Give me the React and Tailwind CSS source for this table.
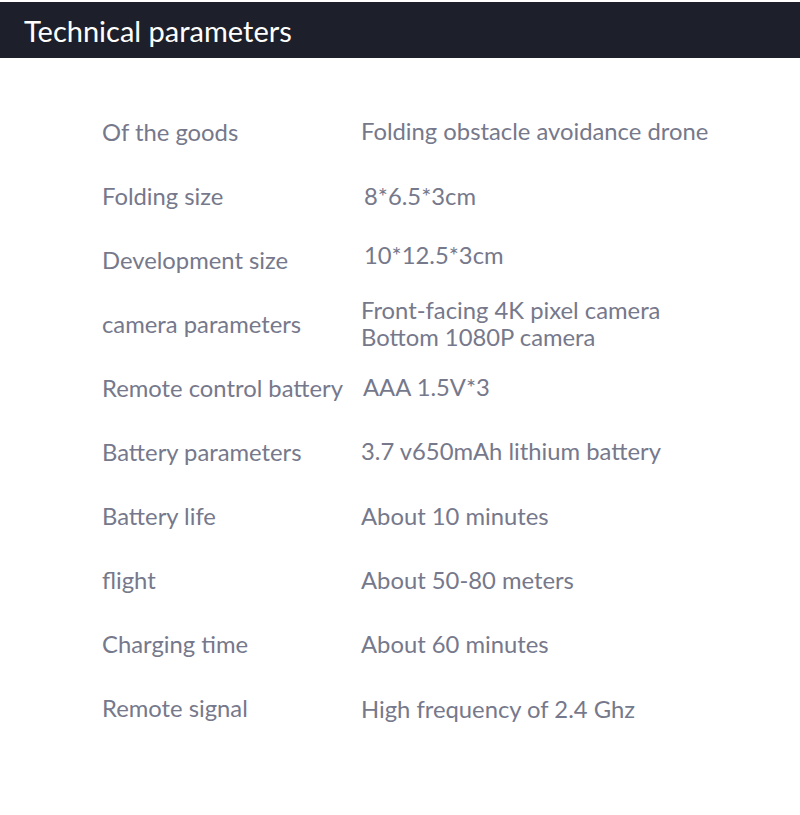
const specs = [
  ["Of the goods", ["Folding obstacle avoidance drone"], "-mt-[3px]"],
  ["Folding size", ["8*6.5*3cm"], "pl-[3px] -mt-[2px]"],
  ["Development size", ["10*12.5*3cm"], "pl-[3px] -mt-[11px]"],
  ["camera parameters", ["Front-facing 4K pixel camera", "Bottom 1080P camera"], "-mt-[3px]"],
  ["Remote control battery", ["AAA 1.5V*3"], "pl-[2px] -mt-[4px]"],
  ["Battery parameters", ["3.7 v650mAh lithium battery"], "-mt-[4px]"],
  ["Battery life", ["About 10 minutes"], "-mt-[2px]"],
  ["flight", ["About 50-80 meters"], "-mt-[2px]"],
  ["Charging time", ["About 60 minutes"], "-mt-[2px]"],
  ["Remote signal", ["High frequency of 2.4 Ghz"], ""],
];

export default function App() {
  return (
    <div className="w-[800px] h-[815px] bg-white font-['Lato',sans-serif] pt-[2px]">
      <div className="h-[56px] bg-[#1d1f2b] flex items-center pl-[24px]">
        <h1 className="text-white text-[29px] leading-none">Technical parameters</h1>
      </div>

      <div className="pt-[43px] pl-[102px]">
        {specs.map(([label, value, shift]) => (
          <div key={label} className="h-[64px] flex items-center text-[23.8px] text-[#76788b]">
            <div className="w-[259px] shrink-0">{label}</div>
            <div className={"leading-[27px] " + shift}>
              {value.map((line) => (
                <div key={line}>{line}</div>
              ))}
            </div>
          </div>
        ))}
      </div>
    </div>
  );
}
